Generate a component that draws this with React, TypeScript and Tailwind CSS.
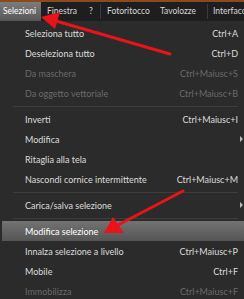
import React from "react";

type Item =
  | { kind: "sep" }
  | {
      kind: "item";
      label: string;
      shortcut?: string;
      disabled?: boolean;
      submenu?: boolean;
      active?: boolean;
    };

const items: Item[] = [
  { kind: "item", label: "Seleziona tutto", shortcut: "Ctrl+A" },
  { kind: "item", label: "Deseleziona tutto", shortcut: "Ctrl+D" },
  { kind: "item", label: "Da maschera", shortcut: "Ctrl+Maiusc+S", disabled: true },
  { kind: "item", label: "Da oggetto vettoriale", shortcut: "Ctrl+Maiusc+B", disabled: true },
  { kind: "sep" },
  { kind: "item", label: "Inverti", shortcut: "Ctrl+Maiusc+I" },
  { kind: "item", label: "Modifica", submenu: true },
  { kind: "item", label: "Ritaglia alla tela" },
  { kind: "item", label: "Nascondi cornice intermittente", shortcut: "Ctrl+Maiusc+M" },
  { kind: "sep" },
  { kind: "item", label: "Carica/salva selezione", submenu: true },
  { kind: "sep" },
  { kind: "item", label: "Modifica selezione", active: true },
  { kind: "item", label: "Innalza selezione a livello", shortcut: "Ctrl+Maiusc+P" },
  { kind: "item", label: "Mobile", shortcut: "Ctrl+F" },
  { kind: "item", label: "Immobilizza", shortcut: "Ctrl+Maiusc+F", disabled: true },
];

function MenuBar() {
  return (
    <div className="flex h-[21px] items-stretch overflow-hidden border-t-2 border-[#8a4a1e] bg-[#1e1e1e] text-[8.5px] text-[#d8d8d8]">
      <div className="flex w-[41px] shrink-0 items-center bg-gradient-to-b from-[#7c7c7c] to-[#575757] pl-[3px] text-white">
        Selezioni
      </div>
      <div className="flex w-[43px] shrink-0 items-center pl-[6px]">Finestra</div>
      <div className="flex w-[16px] shrink-0 items-center pl-[5px]">?</div>
      <div className="my-[2px] w-px shrink-0 bg-[#3a3a3a]" />
      <div className="flex w-[54px] shrink-0 items-center pl-[6px]">Fotoritocco</div>
      <div className="flex w-[52px] shrink-0 items-center pl-[5px]">Tavolozze</div>
      <div className="my-[2px] w-px shrink-0 bg-[#3a3a3a]" />
      <div className="flex shrink-0 items-center whitespace-nowrap pl-[5px]">Interfaccia</div>
    </div>
  );
}

function Arrows() {
  return (
    <svg className="pointer-events-none absolute left-0 top-0" width="244" height="299">
      <line x1="170" y1="54" x2="56" y2="21" stroke="#e8141a" strokeWidth="3" strokeLinecap="round" />
      <polygon points="41,17 60,12 55,29" fill="#e8141a" />
      <line x1="183" y1="191" x2="118" y2="225" stroke="#e8141a" strokeWidth="3" strokeLinecap="round" />
      <polygon points="104,233 113,217 124,233" fill="#e8141a" />
    </svg>
  );
}

export default function App() {
  return (
    <div
      className="relative h-[299px] w-[244px] overflow-hidden bg-[#2b2b2b] text-[9px] leading-none"
      style={{ fontFamily: "Lato, 'Liberation Sans', sans-serif" }}
    >
      <MenuBar />
      <div className="pt-[2px]">
        {items.map((item, i) =>
          item.kind === "sep" ? (
            <div key={i} className="flex h-[6px] items-center pl-[13px] pr-[6px]">
              <div className="h-px w-full bg-[#3d3d3d]" />
            </div>
          ) : (
            <div
              key={i}
              className={
                item.active
                  ? "ml-[2px] flex h-[20px] items-center justify-between bg-gradient-to-b from-[#737373] to-[#555555] pl-[23px] pr-[6px] text-white"
                  : item.disabled
                    ? "flex h-[20px] items-center justify-between pl-[25px] pr-[6px] text-[#6a6a6a]"
                    : "flex h-[20px] items-center justify-between pl-[25px] pr-[6px] text-[#dcdcdc]"
              }
            >
              <span>{item.label}</span>
              {item.shortcut && <span>{item.shortcut}</span>}
              {item.submenu && (
                <span className="-mr-[5px] h-0 w-0 border-y-[3px] border-l-[3px] border-y-transparent border-l-[#bdbdbd]" />
              )}
            </div>
          )
        )}
      </div>
      <Arrows />
    </div>
  );
}
